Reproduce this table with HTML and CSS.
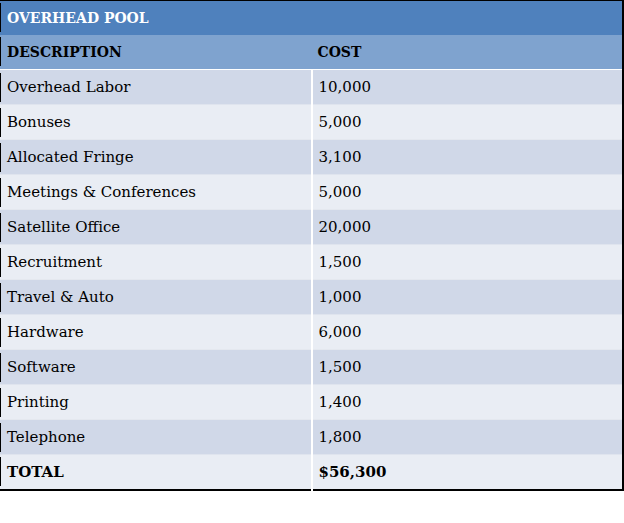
FILE: index.html
```html
<!DOCTYPE html>
<html>
<head>
<meta charset="utf-8">
<link rel="stylesheet" href="styles.css">
</head>
<body>
<table class="pool">
  <thead>
    <tr class="title"><th colspan="2" class="c1">OVERHEAD POOL</th></tr>
    <tr class="heads"><th class="c1">DESCRIPTION</th><th class="c2">COST</th></tr>
  </thead>
  <tbody>
    <tr class="odd"><td class="c1">Overhead Labor</td><td class="c2">10,000</td></tr>
    <tr class="even"><td class="c1">Bonuses</td><td class="c2">5,000</td></tr>
    <tr class="odd"><td class="c1">Allocated Fringe</td><td class="c2">3,100</td></tr>
    <tr class="even"><td class="c1">Meetings &amp; Conferences</td><td class="c2">5,000</td></tr>
    <tr class="odd"><td class="c1">Satellite Office</td><td class="c2">20,000</td></tr>
    <tr class="even"><td class="c1">Recruitment</td><td class="c2">1,500</td></tr>
    <tr class="odd"><td class="c1">Travel &amp; Auto</td><td class="c2">1,000</td></tr>
    <tr class="even"><td class="c1">Hardware</td><td class="c2">6,000</td></tr>
    <tr class="odd"><td class="c1">Software</td><td class="c2">1,500</td></tr>
    <tr class="even"><td class="c1">Printing</td><td class="c2">1,400</td></tr>
    <tr class="odd"><td class="c1">Telephone</td><td class="c2">1,800</td></tr>
    <tr class="even total"><td class="c1">TOTAL</td><td class="c2">$56,300</td></tr>
  </tbody>
</table>
</body>
</html>
```

FILE: styles.css
```css
html, body {
  margin: 0;
  padding: 0;
  background: #ffffff;
}

.pool {
  border-collapse: collapse;
  width: 624px;
  table-layout: fixed;
  font-family: "DejaVu Serif", "Liberation Serif", serif;
  font-size: 15px;
  color: #000000;
  border-top: 1px solid #000;
  border-right: 2px solid #000;
  border-bottom: 2px solid #000;
}

.pool th,
.pool td {
  height: 35px;
  padding: 0;
  text-align: left;
  vertical-align: middle;
  white-space: nowrap;
  box-sizing: border-box;
}

.pool th {
  font-size: 14px;
}

.pool .c1 {
  width: 311px;
  padding-left: 7px;
  background-image: linear-gradient(#000, #000);
  background-size: 1px calc(100% - 5px);
  background-position: left center;
  background-repeat: no-repeat;
}

.pool .c2 {
  padding-left: 6px;
}

.pool tbody .c2 {
  border-left: 2px solid #ffffff;
}

.title th {
  background-color: #4f81bd;
  color: #ffffff;
  font-weight: bold;
  height: 34px;
}

.heads th {
  background-color: #7fa3cf;
  font-weight: bold;
  border-bottom: 1px solid #ffffff;
  height: 35px;
}

.odd td {
  background-color: #d0d8e8;
  border-bottom: 1px solid #dfe4ee;
}

.even td {
  background-color: #e9edf4;
  border-bottom: 1px solid #e4e8ef;
}

.total td {
  font-weight: bold;
  border-bottom: none;
}
```
